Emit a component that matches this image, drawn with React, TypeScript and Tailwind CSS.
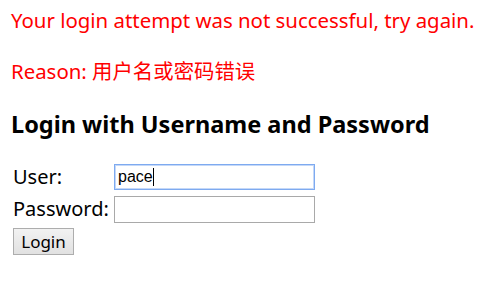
export default function App() {
  return (
    <div className="bg-white w-[493px] h-[281px] overflow-hidden text-black font-['Noto_Sans','Noto_Sans_CJK_SC',sans-serif]">
      <div className="pl-[11px] pt-[7px]">
        <p className="text-[#ff0000] text-[20.4px] leading-[27px] m-0 whitespace-nowrap">Your login attempt was not successful, try again.</p>
        <p className="text-[#ff0000] text-[20.4px] leading-[27px] mt-[24px]">Reason: 用户名或密码错误</p>
        <h2 className="font-bold text-[23.5px] leading-[32px] mt-[23px] whitespace-nowrap">Login with Username and Password</h2>
        <div className="mt-[21px] ml-[2px] flex flex-col">
          <div className="flex items-center h-[32px]">
            <span className="text-[20px] w-[101px] shrink-0">User:</span>
            <div className="w-[201px] h-[26px] border border-[#7eaaf0] shadow-[0_0_0_1px_#c4d8f8_inset] flex items-center px-[3px] font-['Liberation_Sans',sans-serif] text-[16px]">
              pace<span className="w-px h-[18px] bg-black"></span>
            </div>
          </div>
          <div className="flex items-center h-[32px]">
            <span className="text-[20px] w-[101px] shrink-0">Password:</span>
            <div className="w-[201px] h-[27px] border border-[#a9a9a9]"></div>
          </div>
          <div className="flex items-center h-[32px]">
            <button className="w-[61px] h-[27px] border border-[#adadad] bg-gradient-to-b from-[#f2f2f2] to-[#e1e1e1] text-[17px] leading-none">Login</button>
          </div>
        </div>
      </div>
    </div>
  );
}
